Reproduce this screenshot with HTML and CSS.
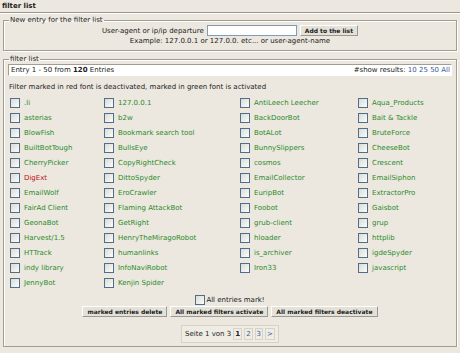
FILE: index.html
```html
<!DOCTYPE html>
<html>
<head>
    <meta charset="UTF-8">
    <title>filter list</title>
    <link rel="stylesheet" href="styles.css">
</head>
<body>
    <div class="titlebar">filter list</div>

    <!-- New entry form -->
    <fieldset class="box entry">
        <legend>New entry for the filter list</legend>
        <div class="entry-row">
            <label for="agent">User-agent or ip/ip departure</label>
            <input type="text" id="agent" class="agent-input">
            <button type="button" class="btn">Add to the list</button>
        </div>
        <div class="example">Example: 127.0.0.1 or 127.0.0. etc... or user-agent-name</div>
    </fieldset>

    <!-- Filter list -->
    <fieldset class="box list">
        <legend>filter list</legend>
        <div class="infobar">
            <span>Entry 1 - 50 from <b>120</b> Entries</span>
            <span>#show results: <a class="num">10</a> <a class="num">25</a> <a class="num">50</a> <a class="num">All</a></span>
        </div>
        <p class="hint">Filter marked in red font is deactivated, marked in green font is activated</p>

        <div class="filters">
            <label class="item"><input type="checkbox" class="cb">.li</label>
            <label class="item"><input type="checkbox" class="cb">127.0.0.1</label>
            <label class="item"><input type="checkbox" class="cb">AntiLeech Leecher</label>
            <label class="item"><input type="checkbox" class="cb">Aqua_Products</label>

            <label class="item"><input type="checkbox" class="cb">asterias</label>
            <label class="item"><input type="checkbox" class="cb">b2w</label>
            <label class="item"><input type="checkbox" class="cb">BackDoorBot</label>
            <label class="item"><input type="checkbox" class="cb">Bait &amp; Tackle</label>

            <label class="item"><input type="checkbox" class="cb">BlowFish</label>
            <label class="item"><input type="checkbox" class="cb">Bookmark search tool</label>
            <label class="item"><input type="checkbox" class="cb">BotALot</label>
            <label class="item"><input type="checkbox" class="cb">BruteForce</label>

            <label class="item"><input type="checkbox" class="cb">BuiltBotTough</label>
            <label class="item"><input type="checkbox" class="cb">BullsEye</label>
            <label class="item"><input type="checkbox" class="cb">BunnySlippers</label>
            <label class="item"><input type="checkbox" class="cb">CheeseBot</label>

            <label class="item"><input type="checkbox" class="cb">CherryPicker</label>
            <label class="item"><input type="checkbox" class="cb">CopyRightCheck</label>
            <label class="item"><input type="checkbox" class="cb">cosmos</label>
            <label class="item"><input type="checkbox" class="cb">Crescent</label>

            <label class="item off"><input type="checkbox" class="cb">DigExt</label>
            <label class="item"><input type="checkbox" class="cb">DittoSpyder</label>
            <label class="item"><input type="checkbox" class="cb">EmailCollector</label>
            <label class="item"><input type="checkbox" class="cb">EmailSiphon</label>

            <label class="item"><input type="checkbox" class="cb">EmailWolf</label>
            <label class="item"><input type="checkbox" class="cb">EroCrawler</label>
            <label class="item"><input type="checkbox" class="cb">EuripBot</label>
            <label class="item"><input type="checkbox" class="cb">ExtractorPro</label>

            <label class="item"><input type="checkbox" class="cb">FairAd Client</label>
            <label class="item"><input type="checkbox" class="cb">Flaming AttackBot</label>
            <label class="item"><input type="checkbox" class="cb">Foobot</label>
            <label class="item"><input type="checkbox" class="cb">Gaisbot</label>

            <label class="item"><input type="checkbox" class="cb">GeonaBot</label>
            <label class="item"><input type="checkbox" class="cb">GetRight</label>
            <label class="item"><input type="checkbox" class="cb">grub-client</label>
            <label class="item"><input type="checkbox" class="cb">grup</label>

            <label class="item"><input type="checkbox" class="cb">Harvest/1.5</label>
            <label class="item"><input type="checkbox" class="cb">HenryTheMiragoRobot</label>
            <label class="item"><input type="checkbox" class="cb">hloader</label>
            <label class="item"><input type="checkbox" class="cb">httplib</label>

            <label class="item"><input type="checkbox" class="cb">HTTrack</label>
            <label class="item"><input type="checkbox" class="cb">humanlinks</label>
            <label class="item"><input type="checkbox" class="cb">is_archiver</label>
            <label class="item"><input type="checkbox" class="cb">igdeSpyder</label>

            <label class="item"><input type="checkbox" class="cb">indy library</label>
            <label class="item"><input type="checkbox" class="cb">InfoNaviRobot</label>
            <label class="item"><input type="checkbox" class="cb">Iron33</label>
            <label class="item"><input type="checkbox" class="cb">javascript</label>

            <label class="item"><input type="checkbox" class="cb">JennyBot</label>
            <label class="item"><input type="checkbox" class="cb">Kenjin Spider</label>
        </div>

        <div class="markall">
            <label><input type="checkbox" class="cb">All entries mark!</label>
        </div>

        <div class="actions">
            <button type="button" class="btn">marked entries delete</button>
            <button type="button" class="btn">All marked filters activate</button>
            <button type="button" class="btn">All marked filters deactivate</button>
        </div>

        <div class="pager-wrap">
            <div class="pager">
                <span class="pg-label">Seite 1 von 3</span>
                <span class="pg cur">1</span>
                <a class="pg">2</a>
                <a class="pg">3</a>
                <a class="pg">&gt;</a>
            </div>
        </div>
    </fieldset>
</body>
</html>
```

FILE: styles.css
```css
body {
    margin: 0;
    background: #ece8df;
    font-family: "DejaVu Sans", Verdana, sans-serif;
    font-size: 7px;
    color: #222;
}
.titlebar {
    font-weight: bold;
    padding: 2px 2px 0;
    height: 10px;
    border-bottom: 1px solid #9a968a;
    box-shadow: 0 1px 0 #fff;
}
.box {
    margin: 0 3px;
    padding: 0 4px;
    border: 1px solid #a19d91;
    box-shadow: inset 1px 1px 0 #fff, 1px 1px 0 #fff;
}
.box legend {
    padding: 0 1px;
    margin-left: 1px;
}
.entry {
    margin-top: 3px;
    padding-bottom: 5px;
}
.entry-row {
    display: flex;
    align-items: center;
    justify-content: center;
    gap: 3px;
    margin-top: 1px;
}
.agent-input {
    width: 88px;
    height: 9px;
    padding: 0;
    margin: 0;
    border: 1px solid #7f9db9;
    background: #fff;
}
.btn {
    font-family: inherit;
    font-size: 6px;
    font-weight: bold;
    color: #222;
    background: #e4e2d8;
    border: 1px solid #fff;
    border-right-color: #9c9a90;
    border-bottom-color: #9c9a90;
    padding: 1px 4px;
    height: 11px;
    line-height: 8px;
    margin: 0;
}
.example {
    text-align: center;
    margin-top: 1px;
}
.list {
    margin-top: 4px;
    padding-bottom: 3px;
}
.infobar {
    display: flex;
    justify-content: space-between;
    background: #fff;
    border: 1px solid #a19d91;
    border-right-color: #fff;
    border-bottom-color: #fff;
    height: 10px;
    line-height: 10px;
    padding: 0 1px 0 2px;
    margin-top: 1px;
}
.num {
    color: #3b5a9a;
}
.hint {
    margin: 7px 0 4px 1px;
}
.filters {
    display: grid;
    grid-template-columns: 94px 136px 118px 1fr;
    grid-auto-rows: 15px;
}
.item {
    display: flex;
    align-items: center;
    gap: 2px;
    color: #2a8a2a;
}
.item.off {
    color: #c01010;
}
.cb {
    appearance: none;
    -webkit-appearance: none;
    width: 10px;
    height: 10px;
    margin: 0 2px 0 2px;
    border: 1px solid #4f6d8c;
    background: linear-gradient(135deg, #dcdcd6, #fbfbf8);
    flex: none;
}
.markall {
    display: flex;
    justify-content: center;
    margin-top: 5px;
}
.markall label {
    display: flex;
    align-items: center;
}
.markall .cb {
    margin: 0 1px 0 0;
}
.actions {
    display: flex;
    justify-content: center;
    gap: 3px;
    margin-top: 1px;
}
.pager-wrap {
    display: flex;
    justify-content: center;
    margin-top: 8px;
}
.pager {
    display: flex;
    align-items: center;
    gap: 2px;
    padding: 2px 3px;
    border: 1px solid #d6d2c8;
    background: #efece4;
    height: 12px;
}
.pg {
    border: 1px solid #d6d2c8;
    padding: 1px 1px;
    color: #3b5a9a;
}
.pg.cur {
    font-weight: bold;
    color: #222;
}
```
